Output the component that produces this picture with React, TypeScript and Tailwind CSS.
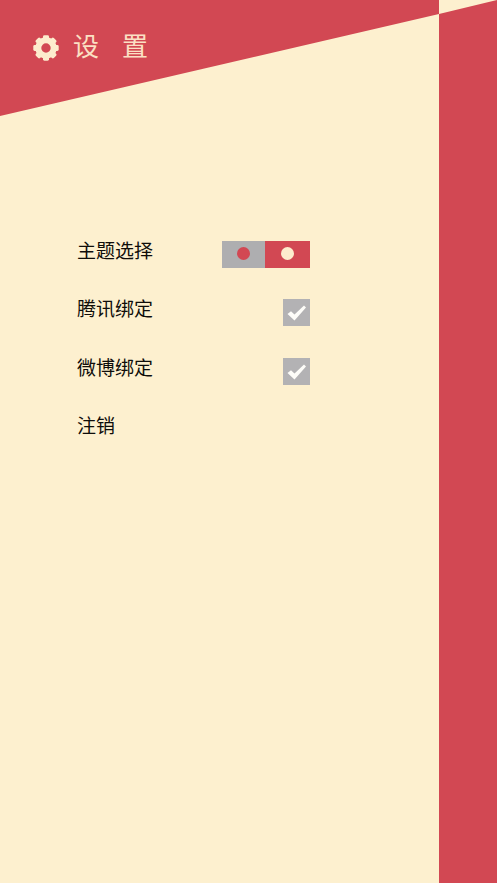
const cjk = "font-['Noto_Sans_CJK_SC','Noto_Sans_CJK_JP',serif]";

function Gear() {
  const teeth = [0, 45, 90, 135, 180, 225, 270, 315];
  return (
    <svg width="26" height="26" viewBox="0 0 26 26" className="shrink-0">
      {teeth.map((angle) => (
        <rect
          key={angle}
          x="10"
          y="0.3"
          width="6"
          height="5"
          rx="1.4"
          fill="#fdeccd"
          transform={`rotate(${angle} 13 13)`}
        />
      ))}
      <circle cx="13" cy="13" r="7.7" fill="none" stroke="#fdeccd" strokeWidth="6" />
    </svg>
  );
}

function Check() {
  return (
    <div className="flex h-[27px] w-[27px] items-center justify-center bg-[#b3b2b4]">
      <svg width="27" height="27" viewBox="0 0 27 27">
        <path
          d="M4.5 15 L8 12.2 L11.5 15.4 L21 6.5 L23 8.5 L11.5 21.5 Z"
          fill="#fdfcf8"
        />
      </svg>
    </div>
  );
}

function ThemeSwitch() {
  return (
    <div className="flex h-[27px] w-[88px]">
      <div className="flex w-[43px] items-center justify-center bg-[#aeaeb0] pb-[3px]">
        <span className="h-[13px] w-[13px] rounded-full bg-[#d24853]" />
      </div>
      <div className="flex w-[45px] items-center justify-center bg-[#d24853] pb-[3px]">
        <span className="h-[13px] w-[13px] rounded-full bg-[#fdeccd]" />
      </div>
    </div>
  );
}

export default function App() {
  return (
    <div className={`flex h-[883px] w-[497px] overflow-hidden bg-[#fdf0cf] ${cjk}`}>
      <main className="w-[439px] shrink-0">
        <header className="h-[116px] bg-[#d24853] pl-[33px] pt-[35px] [clip-path:polygon(0_0,100%_0,100%_14px,0_100%)]">
          <div className="flex items-start">
            <Gear />
            <h1 className="-mt-[3px] ml-[14px] text-[26px] leading-[26px] tracking-[23px] text-[#fbe0c4]">
              设置
            </h1>
          </div>
        </header>

        <section className="ml-[77px] mt-[125px] w-[233px] text-[19px] leading-[17px] text-[#0f0d0a]">
          <div className="flex items-start justify-between">
            <span>主题选择</span>
            <ThemeSwitch />
          </div>
          <div className="mt-[31px] flex items-start justify-between">
            <span>腾讯绑定</span>
            <Check />
          </div>
          <div className="mt-[32px] flex items-start justify-between">
            <span>微博绑定</span>
            <Check />
          </div>
          <div className="mt-[31px]">注销</div>
        </section>
      </main>

      <aside className="flex-1">
        <div className="h-full bg-[#d24853] [clip-path:polygon(0_14px,100%_0,100%_100%,0_100%)]" />
      </aside>
    </div>
  );
}
